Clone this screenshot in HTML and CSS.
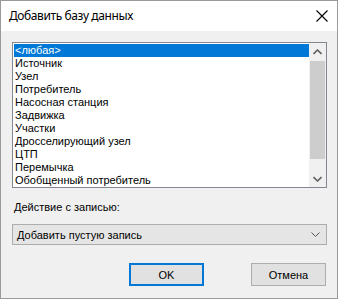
FILE: index.html
```html
<!DOCTYPE html>
<html>
<head>
<meta charset="utf-8">
<link rel="stylesheet" href="styles.css">
</head>
<body>
<div class="window">
  <div class="titlebar">
    <span class="title">Добавить базу данных</span>
    <svg class="close" width="12" height="12" viewBox="0 0 12 12"><path d="M0.5 0.5 L11.5 11.5 M11.5 0.5 L0.5 11.5" stroke="#000" stroke-width="1.1" fill="none"/></svg>
  </div>
  <div class="content">
    <div class="listbox">
      <div class="items">
        <div class="item selected">&lt;любая&gt;</div>
        <div class="item">Источник</div>
        <div class="item">Узел</div>
        <div class="item">Потребитель</div>
        <div class="item">Насосная станция</div>
        <div class="item">Задвижка</div>
        <div class="item">Участки</div>
        <div class="item">Дросселирующий узел</div>
        <div class="item">ЦТП</div>
        <div class="item">Перемычка</div>
        <div class="item">Обобщенный потребитель</div>
      </div>
      <div class="scrollbar">
        <div class="sb-btn"><svg width="9" height="6" viewBox="0 0 9 6"><path d="M0.5 5 L4.5 1 L8.5 5" stroke="#606060" stroke-width="1.6" fill="none"/></svg></div>
        <div class="sb-track"><div class="sb-thumb"></div></div>
        <div class="sb-btn"><svg width="9" height="6" viewBox="0 0 9 6"><path d="M0.5 1 L4.5 5 L8.5 1" stroke="#606060" stroke-width="1.6" fill="none"/></svg></div>
      </div>
    </div>
    <div class="label">Действие с записью:</div>
    <div class="combo">
      <span>Добавить пустую запись</span>
      <svg width="9" height="5" viewBox="0 0 9 5"><path d="M0.5 0.5 L4.5 4.5 L8.5 0.5" stroke="#555" stroke-width="1" fill="none"/></svg>
    </div>
    <div class="buttons">
      <div class="btn default">OK</div>
      <div class="btn">Отмена</div>
    </div>
  </div>
</div>
</body>
</html>
```
FILE: styles.css
```css
html, body {
  margin: 0;
  padding: 0;
}
body {
  font-family: "Liberation Sans", Arial, sans-serif;
  font-size: 11px;
  color: #000;
}
.window {
  width: 338px;
  height: 299px;
  box-sizing: border-box;
  border: 1px solid #9a9a9a;
  background: #f0f0f0;
  display: flex;
  flex-direction: column;
}
.titlebar {
  height: 30px;
  background: #fff;
  display: flex;
  align-items: center;
  justify-content: space-between;
  padding: 0 9px 0 8px;
  font-family: "Noto Sans", sans-serif;
  font-size: 12px;
  letter-spacing: -0.4px;
}
.title {
  margin-top: -1px;
}
.close {
  display: block;
}
.content {
  padding: 11px 10px 0 11px;
  display: flex;
  flex-direction: column;
}
.listbox {
  width: 315px;
  height: 146px;
  box-sizing: border-box;
  border: 1px solid #828790;
  background: #fff;
  display: flex;
}
.items {
  flex: 1;
  padding: 1px 0 0 1px;
}
.item {
  height: 13px;
  line-height: 13px;
  padding-left: 1px;
  white-space: nowrap;
}
.item.selected {
  background: #0078d7;
  color: #fff;
}
.scrollbar {
  width: 17px;
  background: #f0f0f0;
  display: flex;
  flex-direction: column;
}
.sb-btn {
  height: 17px;
  display: flex;
  align-items: center;
  justify-content: center;
}
.sb-track {
  flex: 1;
  padding: 1px;
}
.sb-thumb {
  height: 98px;
  background: #cdcdcd;
}
.label {
  margin-top: 13px;
  height: 13px;
  line-height: 13px;
  padding-left: 2px;
}
.combo {
  margin-top: 10px;
  width: 315px;
  height: 21px;
  box-sizing: border-box;
  border: 1px solid #adadad;
  background: #e5e5e5;
  display: flex;
  align-items: center;
  justify-content: space-between;
  padding: 0 6px 0 4px;
}
.buttons {
  margin-top: 18px;
  display: flex;
  justify-content: flex-end;
  gap: 47px;
  padding-right: 1px;
}
.btn {
  width: 73px;
  height: 21px;
  border: 1px solid #adadad;
  background: #e1e1e1;
  display: flex;
  align-items: center;
  justify-content: center;
}
.btn.default {
  border: 2px solid #0078d7;
  width: 71px;
  height: 19px;
}
```
